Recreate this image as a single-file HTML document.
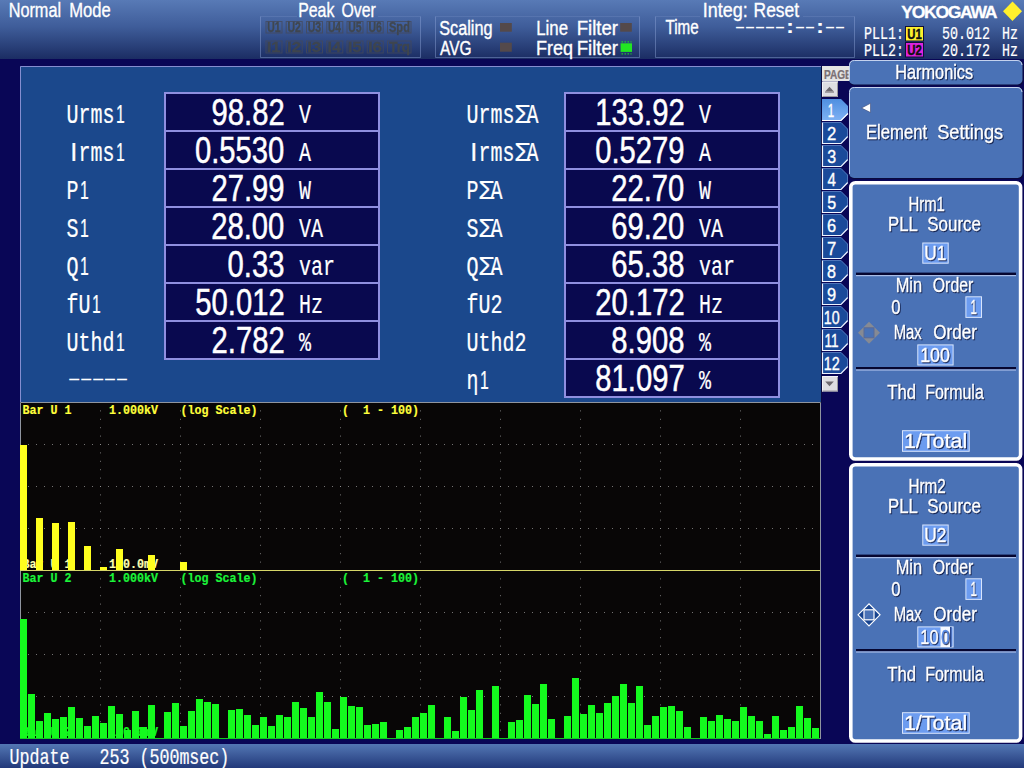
<!DOCTYPE html>
<html lang="en"><head><meta charset="utf-8"><title>Power Analyzer - Harmonics</title>
<style>
html,body{margin:0;padding:0;background:#08054c;width:1024px;height:768px;overflow:hidden}
svg{display:block}
text{white-space:pre}
.s{font-family:"Liberation Sans",sans-serif}
.sb{font-family:"Liberation Sans",sans-serif;font-weight:bold}
.m{font-family:"Liberation Mono",monospace}
.mb{font-family:"Liberation Mono",monospace;font-weight:bold}
.sh{filter:drop-shadow(1px 1px 0 rgba(10,20,60,0.85))}
</style></head><body>
<svg width="1024" height="768" viewBox="0 0 1024 768">
<defs><linearGradient id="hg" x1="0" y1="0" x2="0" y2="1"><stop offset="0" stop-color="#587ab6"/><stop offset="0.45" stop-color="#3f5d9a"/><stop offset="1" stop-color="#1b2d63"/></linearGradient><linearGradient id="sg" x1="0" y1="0" x2="0" y2="1"><stop offset="0" stop-color="#5377b4"/><stop offset="1" stop-color="#22397a"/></linearGradient><linearGradient id="t1" x1="0" y1="0" x2="0" y2="1"><stop offset="0" stop-color="#4f8fe0"/><stop offset="1" stop-color="#7fb2f4"/></linearGradient></defs>
<rect x="0" y="0" width="1024" height="768" fill="#090656" />
<rect x="0" y="0" width="1024" height="59" fill="url(#hg)" />
<text class="s " transform="translate(0,16.50) scale(0.8072,1)" font-size="20.35" fill="#fff" stroke="#fff" stroke-width="0.35" vector-effect="non-scaling-stroke"><tspan x="10.74" textLength="64.92" lengthAdjust="spacingAndGlyphs">Normal</tspan> <tspan x="85.78" textLength="51.41" lengthAdjust="spacingAndGlyphs">Mode</tspan></text>
<text class="s " transform="translate(0,16.50) scale(0.7794,1)" font-size="20.35" fill="#fff" stroke="#fff" stroke-width="0.35" vector-effect="non-scaling-stroke"><tspan x="382.58" textLength="46.41" lengthAdjust="spacingAndGlyphs">Peak</tspan> <tspan x="438.14" textLength="44.07" lengthAdjust="spacingAndGlyphs">Over</tspan></text>
<path d="M260.5 16.5V57.5H420.5V16.5" fill="none" stroke="#8fa4d8" stroke-opacity="0.45" stroke-width="1"/>
<path d="M260.5 16.5H297 M378 16.5H420.5" fill="none" stroke="#8fa4d8" stroke-opacity="0.2" stroke-width="1"/>
<path d="M435.5 16.5V57.5H639.5V16.5" fill="none" stroke="#8fa4d8" stroke-opacity="0.45" stroke-width="1"/>
<path d="M435.5 16.5H639.5" fill="none" stroke="#8fa4d8" stroke-opacity="0.2" stroke-width="1"/>
<path d="M655.5 16.5V57.5H854.5V16.5" fill="none" stroke="#8fa4d8" stroke-opacity="0.45" stroke-width="1"/>
<path d="M655.5 16.5H700 M803 16.5H854.5" fill="none" stroke="#8fa4d8" stroke-opacity="0.2" stroke-width="1"/>
<rect x="266.0" y="21.5" width="16" height="11.5" fill="none" stroke="#454a5a" stroke-opacity="0.8" stroke-width="1"/>
<text class="sb " transform="translate(267.18,32.00) scale(0.7163,1)" font-size="14.53" fill="#40464c" stroke="#40464c" stroke-width="0.3" vector-effect="non-scaling-stroke" opacity="0.95">U1</text>
<rect x="286.2" y="21.5" width="16" height="11.5" fill="none" stroke="#454a5a" stroke-opacity="0.8" stroke-width="1"/>
<text class="sb " transform="translate(287.42,32.00) scale(0.7236,1)" font-size="14.53" fill="#40464c" stroke="#40464c" stroke-width="0.3" vector-effect="non-scaling-stroke" opacity="0.95">U2</text>
<rect x="306.5" y="21.5" width="16" height="11.5" fill="none" stroke="#454a5a" stroke-opacity="0.8" stroke-width="1"/>
<text class="sb " transform="translate(307.67,32.00) scale(0.7211,1)" font-size="14.53" fill="#40464c" stroke="#40464c" stroke-width="0.3" vector-effect="non-scaling-stroke" opacity="0.95">U3</text>
<rect x="326.8" y="21.5" width="16" height="11.5" fill="none" stroke="#454a5a" stroke-opacity="0.8" stroke-width="1"/>
<text class="sb " transform="translate(327.94,32.00) scale(0.7033,1)" font-size="14.53" fill="#40464c" stroke="#40464c" stroke-width="0.3" vector-effect="non-scaling-stroke" opacity="0.95">U4</text>
<rect x="347.0" y="21.5" width="16" height="11.5" fill="none" stroke="#454a5a" stroke-opacity="0.8" stroke-width="1"/>
<text class="sb " transform="translate(348.18,32.00) scale(0.7163,1)" font-size="14.53" fill="#40464c" stroke="#40464c" stroke-width="0.3" vector-effect="non-scaling-stroke" opacity="0.95">U5</text>
<rect x="367.2" y="21.5" width="16" height="11.5" fill="none" stroke="#454a5a" stroke-opacity="0.8" stroke-width="1"/>
<text class="sb " transform="translate(368.42,32.00) scale(0.7211,1)" font-size="14.53" fill="#40464c" stroke="#40464c" stroke-width="0.3" vector-effect="non-scaling-stroke" opacity="0.95">U6</text>
<rect x="387.5" y="21.5" width="23.5" height="11.5" fill="none" stroke="#454a5a" stroke-opacity="0.8" stroke-width="1"/>
<text class="sb " transform="translate(388.99,32.00) scale(0.7627,1)" font-size="14.53" fill="#40464c" stroke="#40464c" stroke-width="0.3" vector-effect="non-scaling-stroke" opacity="0.95">Spd</text>
<rect x="266.0" y="41" width="16" height="12" fill="none" stroke="#454a5a" stroke-opacity="0.8" stroke-width="1"/>
<text class="sb " transform="translate(266.70,52.00) scale(1.1513,1)" font-size="14.53" fill="#40464c" stroke="#40464c" stroke-width="0.3" vector-effect="non-scaling-stroke" opacity="0.95">I1</text>
<rect x="286.2" y="41" width="16" height="12" fill="none" stroke="#454a5a" stroke-opacity="0.8" stroke-width="1"/>
<text class="sb " transform="translate(286.93,52.00) scale(1.1703,1)" font-size="14.53" fill="#40464c" stroke="#40464c" stroke-width="0.3" vector-effect="non-scaling-stroke" opacity="0.95">I2</text>
<rect x="306.5" y="41" width="16" height="12" fill="none" stroke="#454a5a" stroke-opacity="0.8" stroke-width="1"/>
<text class="sb " transform="translate(307.18,52.00) scale(1.1639,1)" font-size="14.53" fill="#40464c" stroke="#40464c" stroke-width="0.3" vector-effect="non-scaling-stroke" opacity="0.95">I3</text>
<rect x="326.8" y="41" width="16" height="12" fill="none" stroke="#454a5a" stroke-opacity="0.8" stroke-width="1"/>
<text class="sb " transform="translate(327.48,52.00) scale(1.1181,1)" font-size="14.53" fill="#40464c" stroke="#40464c" stroke-width="0.3" vector-effect="non-scaling-stroke" opacity="0.95">I4</text>
<rect x="347.0" y="41" width="16" height="12" fill="none" stroke="#454a5a" stroke-opacity="0.8" stroke-width="1"/>
<text class="sb " transform="translate(347.70,52.00) scale(1.1513,1)" font-size="14.53" fill="#40464c" stroke="#40464c" stroke-width="0.3" vector-effect="non-scaling-stroke" opacity="0.95">I5</text>
<rect x="367.2" y="41" width="16" height="12" fill="none" stroke="#454a5a" stroke-opacity="0.8" stroke-width="1"/>
<text class="sb " transform="translate(367.93,52.00) scale(1.1639,1)" font-size="14.53" fill="#40464c" stroke="#40464c" stroke-width="0.3" vector-effect="non-scaling-stroke" opacity="0.95">I6</text>
<rect x="387.5" y="41" width="23.5" height="12" fill="none" stroke="#454a5a" stroke-opacity="0.8" stroke-width="1"/>
<text class="sb " transform="translate(389.15,52.00) scale(0.9263,1)" font-size="14.53" fill="#40464c" stroke="#40464c" stroke-width="0.3" vector-effect="non-scaling-stroke" opacity="0.95">Trq</text>
<text class="s " transform="translate(439.27,34.60) scale(0.7981,1)" font-size="20.35" fill="#fff" stroke="#fff" stroke-width="0.35" vector-effect="non-scaling-stroke" >Scaling</text>
<text class="s " transform="translate(439.97,54.70) scale(0.7614,1)" font-size="20.35" fill="#fff" stroke="#fff" stroke-width="0.35" vector-effect="non-scaling-stroke" >AVG</text>
<text class="s " transform="translate(0,34.60) scale(0.8695,1)" font-size="20.35" fill="#fff" stroke="#fff" stroke-width="0.35" vector-effect="non-scaling-stroke"><tspan x="616.70" textLength="36.61" lengthAdjust="spacingAndGlyphs">Line</tspan> <tspan x="663.35" textLength="47.41" lengthAdjust="spacingAndGlyphs">Filter</tspan></text>
<text class="s " transform="translate(0,54.70) scale(0.8981,1)" font-size="20.35" fill="#fff" stroke="#fff" stroke-width="0.35" vector-effect="non-scaling-stroke"><tspan x="596.95" textLength="41.21" lengthAdjust="spacingAndGlyphs">Freq</tspan> <tspan x="642.21" textLength="45.90" lengthAdjust="spacingAndGlyphs">Filter</tspan></text>
<rect x="500" y="23" width="11.8" height="8.7" fill="#54494a" />
<rect x="500" y="42.7" width="11.8" height="9" fill="#54494a" />
<rect x="620.2" y="23" width="11.6" height="8.7" fill="#54494a" />
<rect x="620.6" y="43.3" width="11.4" height="8.6" fill="#22e622" />
<path d="M621.5 41.8H631.5M621.5 53.8H631.5" fill="none" stroke="#22e622" stroke-width="1.2" stroke-dasharray="1.5 1.5" stroke-opacity="0.8"/>
<text class="s " transform="translate(0,16.80) scale(0.8693,1)" font-size="20.35" fill="#fff" stroke="#fff" stroke-width="0.35" vector-effect="non-scaling-stroke"><tspan x="808.41" textLength="51.63" lengthAdjust="spacingAndGlyphs">Integ:</tspan> <tspan x="866.87" textLength="52.41" lengthAdjust="spacingAndGlyphs">Reset</tspan></text>
<text class="s " transform="translate(665.47,34.40) scale(0.7468,1)" font-size="20.35" fill="#fff" stroke="#fff" stroke-width="0.35" vector-effect="non-scaling-stroke" >Time</text>
<text class="m" transform="translate(731.34,32.60) scale(1.5377,1)" font-size="18.99" letter-spacing="-4.891" fill="#fff">-----:--:--</text>
<text class="sb " transform="translate(901.30,18.00) scale(1.0250,1)" font-size="17.15" fill="#fff" stroke="#fff" stroke-width="0.3" vector-effect="non-scaling-stroke"  letter-spacing="-1.3">YOKOGAWA</text>
<path d="M1012.5 1.5L1022 11.2L1012.5 21L1003 11.2Z" fill="#fff02c"/>
<text class="m " transform="translate(864.00,39.40) scale(0.7321,1)" font-size="18.21" fill="#fff" stroke="#fff" stroke-width="0.2" vector-effect="non-scaling-stroke" >PLL1:</text>
<text class="m " transform="translate(864.00,55.50) scale(0.7321,1)" font-size="18.21" fill="#fff" stroke="#fff" stroke-width="0.2" vector-effect="non-scaling-stroke" >PLL2:</text>
<rect x="905.5" y="26.5" width="18" height="14.5" fill="#fff02c" stroke="#10103a" stroke-width="1"/>
<rect x="905.5" y="42.5" width="18" height="14.5" fill="#de22de" stroke="#10103a" stroke-width="1"/>
<text class="sb " transform="translate(907.32,39.00) scale(0.7798,1)" font-size="14.53" fill="#111" stroke="#111" stroke-width="0.35" vector-effect="non-scaling-stroke" >U1</text>
<text class="sb " transform="translate(907.31,55.00) scale(0.7878,1)" font-size="14.53" fill="#111" stroke="#111" stroke-width="0.35" vector-effect="non-scaling-stroke" >U2</text>
<text class="m " transform="translate(942.00,39.40) scale(0.7321,1)" font-size="18.21" fill="#fff" stroke="#fff" stroke-width="0.2" vector-effect="non-scaling-stroke" >50.012</text>
<text class="m " transform="translate(942.00,55.50) scale(0.7321,1)" font-size="18.21" fill="#fff" stroke="#fff" stroke-width="0.2" vector-effect="non-scaling-stroke" >20.172</text>
<text class="m " transform="translate(1002.00,39.40) scale(0.7321,1)" font-size="18.21" fill="#fff" stroke="#fff" stroke-width="0.2" vector-effect="non-scaling-stroke" >Hz</text>
<text class="m " transform="translate(1002.00,55.50) scale(0.7321,1)" font-size="18.21" fill="#fff" stroke="#fff" stroke-width="0.2" vector-effect="non-scaling-stroke" >Hz</text>
<rect x="20" y="66" width="801" height="337" fill="#1b488c" />
<path d="M20.5 403V66.5H821" fill="none" stroke="#858ed0" stroke-width="1"/>
<path d="M821.5 66V403" fill="none" stroke="#0a0a40" stroke-width="1"/>
<rect x="164" y="92" width="216" height="268" fill="#09094f" />
<rect x="164" y="92" width="2" height="268" fill="#8f8fe0" />
<rect x="378" y="92" width="2" height="268" fill="#8f8fe0" />
<rect x="164" y="92" width="216" height="2" fill="#8f8fe0" />
<rect x="164" y="130" width="216" height="2" fill="#8f8fe0" />
<rect x="164" y="168" width="216" height="2" fill="#8f8fe0" />
<rect x="164" y="206" width="216" height="2" fill="#8f8fe0" />
<rect x="164" y="244" width="216" height="2" fill="#8f8fe0" />
<rect x="164" y="282" width="216" height="2" fill="#8f8fe0" />
<rect x="164" y="320" width="216" height="2" fill="#8f8fe0" />
<rect x="164" y="358" width="216" height="2" fill="#8f8fe0" />
<rect x="564" y="92" width="216" height="306" fill="#09094f" />
<rect x="564" y="92" width="2" height="306" fill="#8f8fe0" />
<rect x="778" y="92" width="2" height="306" fill="#8f8fe0" />
<rect x="564" y="92" width="216" height="2" fill="#8f8fe0" />
<rect x="564" y="130" width="216" height="2" fill="#8f8fe0" />
<rect x="564" y="168" width="216" height="2" fill="#8f8fe0" />
<rect x="564" y="206" width="216" height="2" fill="#8f8fe0" />
<rect x="564" y="244" width="216" height="2" fill="#8f8fe0" />
<rect x="564" y="282" width="216" height="2" fill="#8f8fe0" />
<rect x="564" y="320" width="216" height="2" fill="#8f8fe0" />
<rect x="564" y="358" width="216" height="2" fill="#8f8fe0" />
<rect x="564" y="396" width="216" height="2" fill="#8f8fe0" />
<text class="m" transform="translate(66.60,122.80) scale(0.7321,1)" font-size="27.31" fill="#fff" stroke="#fff" stroke-width="0.25" vector-effect="non-scaling-stroke"><tspan x="0.00">Urms</tspan><tspan class="s" font-size="26.16" x="67.48" textLength="11.96" lengthAdjust="spacingAndGlyphs">1</tspan></text>
<text class="s" transform="translate(211.56,125.30) scale(0.8081,1)" font-size="36.16" fill="#fff" stroke="#fff" stroke-width="0.45" vector-effect="non-scaling-stroke">98.82</text>
<text class="m " transform="translate(299.00,122.80) scale(0.7321,1)" font-size="27.31" fill="#fff" stroke="#fff" stroke-width="0.2" vector-effect="non-scaling-stroke" >V</text>
<text class="m" transform="translate(66.60,160.80) scale(0.7321,1)" font-size="27.31" fill="#fff" stroke="#fff" stroke-width="0.25" vector-effect="non-scaling-stroke"><tspan class="s" font-size="26.16" x="5.12" textLength="9.69" lengthAdjust="spacingAndGlyphs">I</tspan><tspan x="16.39">rms</tspan><tspan class="s" font-size="26.16" x="67.48" textLength="11.96" lengthAdjust="spacingAndGlyphs">1</tspan></text>
<text class="s" transform="translate(194.96,163.30) scale(0.8081,1)" font-size="36.16" fill="#fff" stroke="#fff" stroke-width="0.45" vector-effect="non-scaling-stroke">0.5530</text>
<text class="m " transform="translate(299.00,160.80) scale(0.7321,1)" font-size="27.31" fill="#fff" stroke="#fff" stroke-width="0.2" vector-effect="non-scaling-stroke" >A</text>
<text class="m" transform="translate(66.60,198.80) scale(0.7321,1)" font-size="27.31" fill="#fff" stroke="#fff" stroke-width="0.25" vector-effect="non-scaling-stroke"><tspan x="0.00">P</tspan><tspan class="s" font-size="26.16" x="18.31" textLength="11.96" lengthAdjust="spacingAndGlyphs">1</tspan></text>
<text class="s" transform="translate(211.47,201.30) scale(0.8081,1)" font-size="36.16" fill="#fff" stroke="#fff" stroke-width="0.45" vector-effect="non-scaling-stroke">27.99</text>
<text class="m " transform="translate(299.00,198.80) scale(0.7321,1)" font-size="27.31" fill="#fff" stroke="#fff" stroke-width="0.2" vector-effect="non-scaling-stroke" >W</text>
<text class="m" transform="translate(66.60,236.80) scale(0.7321,1)" font-size="27.31" fill="#fff" stroke="#fff" stroke-width="0.25" vector-effect="non-scaling-stroke"><tspan x="0.00">S</tspan><tspan class="s" font-size="26.16" x="18.31" textLength="11.96" lengthAdjust="spacingAndGlyphs">1</tspan></text>
<text class="s" transform="translate(211.21,239.30) scale(0.8081,1)" font-size="36.16" fill="#fff" stroke="#fff" stroke-width="0.45" vector-effect="non-scaling-stroke">28.00</text>
<text class="m " transform="translate(299.00,236.80) scale(0.7321,1)" font-size="27.31" fill="#fff" stroke="#fff" stroke-width="0.2" vector-effect="non-scaling-stroke" >VA</text>
<text class="m" transform="translate(66.60,274.80) scale(0.7321,1)" font-size="27.31" fill="#fff" stroke="#fff" stroke-width="0.25" vector-effect="non-scaling-stroke"><tspan x="0.00">Q</tspan><tspan class="s" font-size="26.16" x="18.31" textLength="11.96" lengthAdjust="spacingAndGlyphs">1</tspan></text>
<text class="s" transform="translate(227.60,277.30) scale(0.8081,1)" font-size="36.16" fill="#fff" stroke="#fff" stroke-width="0.45" vector-effect="non-scaling-stroke">0.33</text>
<text class="m " transform="translate(299.00,274.80) scale(0.7321,1)" font-size="27.31" fill="#fff" stroke="#fff" stroke-width="0.2" vector-effect="non-scaling-stroke" >var</text>
<text class="m" transform="translate(66.60,312.80) scale(0.7321,1)" font-size="27.31" fill="#fff" stroke="#fff" stroke-width="0.25" vector-effect="non-scaling-stroke"><tspan x="0.00">fU</tspan><tspan class="s" font-size="26.16" x="34.70" textLength="11.96" lengthAdjust="spacingAndGlyphs">1</tspan></text>
<text class="s" transform="translate(195.31,315.30) scale(0.8081,1)" font-size="36.16" fill="#fff" stroke="#fff" stroke-width="0.45" vector-effect="non-scaling-stroke">50.012</text>
<text class="m " transform="translate(299.00,312.80) scale(0.7321,1)" font-size="27.31" fill="#fff" stroke="#fff" stroke-width="0.2" vector-effect="non-scaling-stroke" >Hz</text>
<text class="m" transform="translate(66.60,350.80) scale(0.7321,1)" font-size="27.31" fill="#fff" stroke="#fff" stroke-width="0.25" vector-effect="non-scaling-stroke"><tspan x="0.00">Uthd</tspan><tspan class="s" font-size="26.16" x="67.48" textLength="11.96" lengthAdjust="spacingAndGlyphs">1</tspan></text>
<text class="s" transform="translate(211.56,353.30) scale(0.8081,1)" font-size="36.16" fill="#fff" stroke="#fff" stroke-width="0.45" vector-effect="non-scaling-stroke">2.782</text>
<text class="m " transform="translate(299.00,350.80) scale(0.7321,1)" font-size="27.31" fill="#fff" stroke="#fff" stroke-width="0.2" vector-effect="non-scaling-stroke" >%</text>
<text class="m" transform="translate(466.60,122.80) scale(0.7321,1)" font-size="27.31" fill="#fff" stroke="#fff" stroke-width="0.25" vector-effect="non-scaling-stroke"><tspan x="0.00">Urms</tspan><tspan class="s" font-size="26.16" x="64.99" textLength="23.07" lengthAdjust="spacingAndGlyphs">Σ</tspan><tspan x="81.96">A</tspan></text>
<text class="s" transform="translate(595.31,125.30) scale(0.8081,1)" font-size="36.16" fill="#fff" stroke="#fff" stroke-width="0.45" vector-effect="non-scaling-stroke">133.92</text>
<text class="m " transform="translate(699.00,122.80) scale(0.7321,1)" font-size="27.31" fill="#fff" stroke="#fff" stroke-width="0.2" vector-effect="non-scaling-stroke" >V</text>
<text class="m" transform="translate(466.60,160.80) scale(0.7321,1)" font-size="27.31" fill="#fff" stroke="#fff" stroke-width="0.25" vector-effect="non-scaling-stroke"><tspan class="s" font-size="26.16" x="5.12" textLength="9.69" lengthAdjust="spacingAndGlyphs">I</tspan><tspan x="16.39">rms</tspan><tspan class="s" font-size="26.16" x="64.99" textLength="23.07" lengthAdjust="spacingAndGlyphs">Σ</tspan><tspan x="81.96">A</tspan></text>
<text class="s" transform="translate(595.22,163.30) scale(0.8081,1)" font-size="36.16" fill="#fff" stroke="#fff" stroke-width="0.45" vector-effect="non-scaling-stroke">0.5279</text>
<text class="m " transform="translate(699.00,160.80) scale(0.7321,1)" font-size="27.31" fill="#fff" stroke="#fff" stroke-width="0.2" vector-effect="non-scaling-stroke" >A</text>
<text class="m" transform="translate(466.60,198.80) scale(0.7321,1)" font-size="27.31" fill="#fff" stroke="#fff" stroke-width="0.25" vector-effect="non-scaling-stroke"><tspan x="0.00">P</tspan><tspan class="s" font-size="26.16" x="15.82" textLength="23.07" lengthAdjust="spacingAndGlyphs">Σ</tspan><tspan x="32.78">A</tspan></text>
<text class="s" transform="translate(611.21,201.30) scale(0.8081,1)" font-size="36.16" fill="#fff" stroke="#fff" stroke-width="0.45" vector-effect="non-scaling-stroke">22.70</text>
<text class="m " transform="translate(699.00,198.80) scale(0.7321,1)" font-size="27.31" fill="#fff" stroke="#fff" stroke-width="0.2" vector-effect="non-scaling-stroke" >W</text>
<text class="m" transform="translate(466.60,236.80) scale(0.7321,1)" font-size="27.31" fill="#fff" stroke="#fff" stroke-width="0.25" vector-effect="non-scaling-stroke"><tspan x="0.00">S</tspan><tspan class="s" font-size="26.16" x="15.82" textLength="23.07" lengthAdjust="spacingAndGlyphs">Σ</tspan><tspan x="32.78">A</tspan></text>
<text class="s" transform="translate(611.21,239.30) scale(0.8081,1)" font-size="36.16" fill="#fff" stroke="#fff" stroke-width="0.45" vector-effect="non-scaling-stroke">69.20</text>
<text class="m " transform="translate(699.00,236.80) scale(0.7321,1)" font-size="27.31" fill="#fff" stroke="#fff" stroke-width="0.2" vector-effect="non-scaling-stroke" >VA</text>
<text class="m" transform="translate(466.60,274.80) scale(0.7321,1)" font-size="27.31" fill="#fff" stroke="#fff" stroke-width="0.25" vector-effect="non-scaling-stroke"><tspan x="0.00">Q</tspan><tspan class="s" font-size="26.16" x="15.82" textLength="23.07" lengthAdjust="spacingAndGlyphs">Σ</tspan><tspan x="32.78">A</tspan></text>
<text class="s" transform="translate(611.35,277.30) scale(0.8081,1)" font-size="36.16" fill="#fff" stroke="#fff" stroke-width="0.45" vector-effect="non-scaling-stroke">65.38</text>
<text class="m " transform="translate(699.00,274.80) scale(0.7321,1)" font-size="27.31" fill="#fff" stroke="#fff" stroke-width="0.2" vector-effect="non-scaling-stroke" >var</text>
<text class="m" transform="translate(466.60,312.80) scale(0.7321,1)" font-size="27.31" fill="#fff" stroke="#fff" stroke-width="0.25" vector-effect="non-scaling-stroke"><tspan x="0.00">fU2</tspan></text>
<text class="s" transform="translate(595.31,315.30) scale(0.8081,1)" font-size="36.16" fill="#fff" stroke="#fff" stroke-width="0.45" vector-effect="non-scaling-stroke">20.172</text>
<text class="m " transform="translate(699.00,312.80) scale(0.7321,1)" font-size="27.31" fill="#fff" stroke="#fff" stroke-width="0.2" vector-effect="non-scaling-stroke" >Hz</text>
<text class="m" transform="translate(466.60,350.80) scale(0.7321,1)" font-size="27.31" fill="#fff" stroke="#fff" stroke-width="0.25" vector-effect="non-scaling-stroke"><tspan x="0.00">Uthd2</tspan></text>
<text class="s" transform="translate(611.35,353.30) scale(0.8081,1)" font-size="36.16" fill="#fff" stroke="#fff" stroke-width="0.45" vector-effect="non-scaling-stroke">8.908</text>
<text class="m " transform="translate(699.00,350.80) scale(0.7321,1)" font-size="27.31" fill="#fff" stroke="#fff" stroke-width="0.2" vector-effect="non-scaling-stroke" >%</text>
<text class="m" transform="translate(466.60,388.80) scale(0.7321,1)" font-size="27.31" fill="#fff" stroke="#fff" stroke-width="0.25" vector-effect="non-scaling-stroke"><tspan x="0.00">η</tspan><tspan class="s" font-size="26.16" x="18.31" textLength="11.96" lengthAdjust="spacingAndGlyphs">1</tspan></text>
<text class="s" transform="translate(595.31,391.30) scale(0.8081,1)" font-size="36.16" fill="#fff" stroke="#fff" stroke-width="0.45" vector-effect="non-scaling-stroke">81.097</text>
<text class="m " transform="translate(699.00,388.80) scale(0.7321,1)" font-size="27.31" fill="#fff" stroke="#fff" stroke-width="0.2" vector-effect="non-scaling-stroke" >%</text>
<text class="m" transform="translate(63.15,385.40) scale(1.9221,1)" font-size="18.99" letter-spacing="-5.151" fill="#fff">-----</text>
<rect x="20" y="402" width="801" height="337" fill="#080606" />
<path d="M20.5 739V402.5H820.5V739" fill="none" stroke="#8f959f" stroke-width="1"/>
<path d="M100.5 402V739 M180.5 402V739 M260.5 402V739 M340.5 402V739 M420.5 402V739 M500.5 402V739 M580.5 402V739 M660.5 402V739 M740.5 402V739" stroke="#989898" stroke-width="1" stroke-dasharray="1 7.4" fill="none" stroke-opacity="0.75"/>
<path d="M20 444.5H820 M20 486.5H820 M20 528.5H820 M20 612.5H820 M20 654.5H820 M20 696.5H820" stroke="#989898" stroke-width="1" stroke-dasharray="1 7" fill="none" stroke-opacity="0.75"/>
<text class="mb" transform="translate(0,413.60) scale(0.8541,1)" font-size="13.66" fill="#ffff3c" stroke="#ffff3c" stroke-width="0.2" vector-effect="non-scaling-stroke"><tspan x="26.34">Bar U 1</tspan>   <tspan x="127.62">1.000kV</tspan>   <tspan x="211.33">(log Scale)</tspan>   <tspan x="400.41">(  1 - 100)</tspan></text>
<text class="mb" transform="translate(0,581.60) scale(0.8541,1)" font-size="13.66" fill="#1cf53a" stroke="#1cf53a" stroke-width="0.2" vector-effect="non-scaling-stroke"><tspan x="26.34">Bar U 2</tspan>   <tspan x="127.62">1.000kV</tspan>   <tspan x="211.33">(log Scale)</tspan>   <tspan x="400.41">(  1 - 100)</tspan></text>
<text class="mb" transform="translate(0,568.00) scale(0.8541,1)" font-size="13.66" fill="#ffffb0" stroke="#ffffb0" stroke-width="0.2" vector-effect="non-scaling-stroke"><tspan x="26.34">Bar U 1</tspan>   <tspan x="127.62">100.0mV</tspan></text>
<path d="M20 445h7V570h-7z M36 518h7V570h-7z M52 523h7V570h-7z M68 522h7V570h-7z M84 546h7V570h-7z M100 567h7V570h-7z M116 549h7V570h-7z M148 555h7V570h-7z M180 562h7V570h-7z" fill="#ffff1e"/>
<rect x="20" y="570" width="800" height="1" fill="#d6d668" />
<path d="M20 619h7V739h-7z M28 694h7V739h-7z M36 721h7V739h-7z M44 713h7V739h-7z M52 719h7V739h-7z M60 717h7V739h-7z M68 707h7V739h-7z M76 718h7V739h-7z M84 726h7V739h-7z M92 716h7V739h-7z M100 723h7V739h-7z M108 706h7V739h-7z M116 714h7V739h-7z M124 730h7V739h-7z M132 711h7V739h-7z M140 727h7V739h-7z M148 705h7V739h-7z M156 738h7V739h-7z M164 712h7V739h-7z M172 703h7V739h-7z M180 726h7V739h-7z M188 711h7V739h-7z M196 699h7V739h-7z M204 702h7V739h-7z M212 704h7V739h-7z M220 738h7V739h-7z M228 710h7V739h-7z M236 709h7V739h-7z M244 715h7V739h-7z M252 725h7V739h-7z M260 717h7V739h-7z M268 726h7V739h-7z M276 715h7V739h-7z M284 717h7V739h-7z M292 702h7V739h-7z M300 708h7V739h-7z M308 717h7V739h-7z M316 692h7V739h-7z M324 702h7V739h-7z M332 729h7V739h-7z M340 697h7V739h-7z M348 706h7V739h-7z M356 707h7V739h-7z M364 725h7V739h-7z M372 724h7V739h-7z M380 722h7V739h-7z M388 738h7V739h-7z M396 730h7V739h-7z M404 727h7V739h-7z M412 717h7V739h-7z M420 713h7V739h-7z M428 705h7V739h-7z M436 738h7V739h-7z M444 717h7V739h-7z M452 731h7V739h-7z M460 697h7V739h-7z M468 710h7V739h-7z M476 690h7V739h-7z M484 738h7V739h-7z M492 686h7V739h-7z M500 738h7V739h-7z M508 722h7V739h-7z M516 720h7V739h-7z M524 695h7V739h-7z M532 704h7V739h-7z M540 684h7V739h-7z M548 719h7V739h-7z M556 738h7V739h-7z M564 716h7V739h-7z M572 678h7V739h-7z M580 714h7V739h-7z M588 705h7V739h-7z M596 713h7V739h-7z M604 703h7V739h-7z M612 696h7V739h-7z M620 684h7V739h-7z M628 703h7V739h-7z M636 686h7V739h-7z M644 725h7V739h-7z M652 716h7V739h-7z M660 707h7V739h-7z M668 706h7V739h-7z M676 711h7V739h-7z M684 727h7V739h-7z M692 738h7V739h-7z M700 717h7V739h-7z M708 721h7V739h-7z M716 715h7V739h-7z M724 719h7V739h-7z M732 721h7V739h-7z M740 707h7V739h-7z M748 716h7V739h-7z M756 721h7V739h-7z M764 734h7V739h-7z M772 716h7V739h-7z M780 730h7V739h-7z M788 727h7V739h-7z M796 706h7V739h-7z M804 718h7V739h-7z M812 728h7V739h-7z" fill="#14fa1e"/>
<rect x="20" y="738" width="800" height="1" fill="#14c81e" />
<text class="mb" transform="translate(0,736.00) scale(0.8541,1)" font-size="13.66" fill="#14fa1e" stroke="#14fa1e" stroke-width="0.2" vector-effect="non-scaling-stroke"><tspan x="26.34">Bar U 2</tspan>   <tspan x="127.62">100.0mV</tspan></text>
<rect x="0" y="744" width="1024" height="24" fill="url(#sg)" />
<text class="m " transform="translate(9.50,763.70) scale(0.7844,1)" font-size="21.24" fill="#fff" stroke="#fff" stroke-width="0.2" vector-effect="non-scaling-stroke" >Update   253 (500msec)</text>
<rect x="822" y="66" width="27" height="15" fill="#e4e4e4" />
<clipPath id="pc"><rect x="822" y="66" width="26.5" height="15"/></clipPath>
<g clip-path="url(#pc)">
<text class="sb " transform="translate(823.93,78.70) scale(0.7745,1)" font-size="13.08" fill="#7a7074" stroke="#7a7074" stroke-width="0.2" vector-effect="non-scaling-stroke" >PAGE</text>
</g>
<rect x="822" y="81.5" width="16" height="15.5" fill="#dedee2" />
<path d="M822.5 97.0V82.0H838" fill="none" stroke="#f4f4f6"/>
<path d="M822.5 96.5H837.5V82.5" fill="none" stroke="#9a989e"/>
<path d="M825.2 91.5L829.5 86.7L833.8 91.5Z" fill="#6e6a70"/><rect x="825" y="91.5" width="9" height="1.2" fill="#8a868c"/>
<rect x="822" y="376" width="16" height="15.5" fill="#dedee2" />
<path d="M822.5 391.5V376.5H838" fill="none" stroke="#f4f4f6"/>
<path d="M822.5 391H837.5V377" fill="none" stroke="#9a989e"/>
<path d="M825.2 381.5L829.5 386.3L833.8 381.5Z" fill="#6e6a70"/>
<path d="M822 99H841L848 106V114L841 121H822Z" fill="url(#t1)"/>
<path d="M822 120.5H841L848 113.5" fill="none" stroke="#fff" stroke-width="1.2"/>
<text class="s " transform="translate(827.72,116.90) scale(0.6527,1)" font-size="17.73" fill="#fff" stroke="#fff" stroke-width="0.35" vector-effect="non-scaling-stroke" >1</text>
<path d="M822 122H841L848 129V137L841 144H822Z" fill="#1a4a9a"/>
<path d="M822.5 122V143.5H841L847.7 136.5" fill="none" stroke="#f0f4ff" stroke-width="1.2"/>
<path d="M822 122.5H841L847.5 129V136" fill="none" stroke="#5d7fc0" stroke-width="1" stroke-opacity="0.8"/>
<text class="s " transform="translate(826.97,139.90) scale(0.9399,1)" font-size="17.73" fill="#fff" stroke="#fff" stroke-width="0.35" vector-effect="non-scaling-stroke" >2</text>
<path d="M822 145H841L848 152V160L841 167H822Z" fill="#1a4a9a"/>
<path d="M822.5 145V166.5H841L847.7 159.5" fill="none" stroke="#f0f4ff" stroke-width="1.2"/>
<path d="M822 145.5H841L847.5 152V159" fill="none" stroke="#5d7fc0" stroke-width="1" stroke-opacity="0.8"/>
<text class="s " transform="translate(827.19,162.90) scale(0.9023,1)" font-size="17.73" fill="#fff" stroke="#fff" stroke-width="0.35" vector-effect="non-scaling-stroke" >3</text>
<path d="M822 168H841L848 175V183L841 190H822Z" fill="#1a4a9a"/>
<path d="M822.5 168V189.5H841L847.7 182.5" fill="none" stroke="#f0f4ff" stroke-width="1.2"/>
<path d="M822 168.5H841L847.5 175V182" fill="none" stroke="#5d7fc0" stroke-width="1" stroke-opacity="0.8"/>
<text class="s " transform="translate(827.47,185.90) scale(0.8487,1)" font-size="17.73" fill="#fff" stroke="#fff" stroke-width="0.35" vector-effect="non-scaling-stroke" >4</text>
<path d="M822 191H841L848 198V206L841 213H822Z" fill="#1a4a9a"/>
<path d="M822.5 191V212.5H841L847.7 205.5" fill="none" stroke="#f0f4ff" stroke-width="1.2"/>
<path d="M822 191.5H841L847.5 198V205" fill="none" stroke="#5d7fc0" stroke-width="1" stroke-opacity="0.8"/>
<text class="s " transform="translate(827.16,208.90) scale(0.9023,1)" font-size="17.73" fill="#fff" stroke="#fff" stroke-width="0.35" vector-effect="non-scaling-stroke" >5</text>
<path d="M822 214H841L848 221V229L841 236H822Z" fill="#1a4a9a"/>
<path d="M822.5 214V235.5H841L847.7 228.5" fill="none" stroke="#f0f4ff" stroke-width="1.2"/>
<path d="M822 214.5H841L847.5 221V228" fill="none" stroke="#5d7fc0" stroke-width="1" stroke-opacity="0.8"/>
<text class="s " transform="translate(826.98,231.90) scale(0.9257,1)" font-size="17.73" fill="#fff" stroke="#fff" stroke-width="0.35" vector-effect="non-scaling-stroke" >6</text>
<path d="M822 237H841L848 244V252L841 259H822Z" fill="#1a4a9a"/>
<path d="M822.5 237V258.5H841L847.7 251.5" fill="none" stroke="#f0f4ff" stroke-width="1.2"/>
<path d="M822 237.5H841L847.5 244V251" fill="none" stroke="#5d7fc0" stroke-width="1" stroke-opacity="0.8"/>
<text class="s " transform="translate(826.95,254.90) scale(0.9420,1)" font-size="17.73" fill="#fff" stroke="#fff" stroke-width="0.35" vector-effect="non-scaling-stroke" >7</text>
<path d="M822 260H841L848 267V275L841 282H822Z" fill="#1a4a9a"/>
<path d="M822.5 260V281.5H841L847.7 274.5" fill="none" stroke="#f0f4ff" stroke-width="1.2"/>
<path d="M822 260.5H841L847.5 267V274" fill="none" stroke="#5d7fc0" stroke-width="1" stroke-opacity="0.8"/>
<text class="s " transform="translate(827.10,277.90) scale(0.9119,1)" font-size="17.73" fill="#fff" stroke="#fff" stroke-width="0.35" vector-effect="non-scaling-stroke" >8</text>
<path d="M822 283H841L848 290V298L841 305H822Z" fill="#1a4a9a"/>
<path d="M822.5 283V304.5H841L847.7 297.5" fill="none" stroke="#f0f4ff" stroke-width="1.2"/>
<path d="M822 283.5H841L847.5 290V297" fill="none" stroke="#5d7fc0" stroke-width="1" stroke-opacity="0.8"/>
<text class="s " transform="translate(827.04,300.90) scale(0.9257,1)" font-size="17.73" fill="#fff" stroke="#fff" stroke-width="0.35" vector-effect="non-scaling-stroke" >9</text>
<path d="M822 306H841L848 313V321L841 328H822Z" fill="#1a4a9a"/>
<path d="M822.5 306V327.5H841L847.7 320.5" fill="none" stroke="#f0f4ff" stroke-width="1.2"/>
<path d="M822 306.5H841L847.5 313V320" fill="none" stroke="#5d7fc0" stroke-width="1" stroke-opacity="0.8"/>
<text class="s " transform="translate(823.72,323.90) scale(0.8024,1)" font-size="17.73" fill="#fff" stroke="#fff" stroke-width="0.35" vector-effect="non-scaling-stroke" >10</text>
<path d="M822 329H841L848 336V344L841 351H822Z" fill="#1a4a9a"/>
<path d="M822.5 329V350.5H841L847.7 343.5" fill="none" stroke="#f0f4ff" stroke-width="1.2"/>
<path d="M822 329.5H841L847.5 336V343" fill="none" stroke="#5d7fc0" stroke-width="1" stroke-opacity="0.8"/>
<text class="s " transform="translate(824.57,346.90) scale(0.7651,1)" font-size="17.73" fill="#fff" stroke="#fff" stroke-width="0.35" vector-effect="non-scaling-stroke" >11</text>
<path d="M822 352H841L848 359V367L841 374H822Z" fill="#1a4a9a"/>
<path d="M822.5 352V373.5H841L847.7 366.5" fill="none" stroke="#f0f4ff" stroke-width="1.2"/>
<path d="M822 352.5H841L847.5 359V366" fill="none" stroke="#5d7fc0" stroke-width="1" stroke-opacity="0.8"/>
<text class="s " transform="translate(823.71,369.90) scale(0.8122,1)" font-size="17.73" fill="#fff" stroke="#fff" stroke-width="0.35" vector-effect="non-scaling-stroke" >12</text>
<rect x="849" y="60" width="174.5" height="25.5" rx="5.5" fill="#0a0a3c"/>
<rect x="849" y="60" width="173.5" height="24.5" rx="5" fill="#4a72b6"/>
<path d="M849.5 80.5V65.5Q849.5 60.5 854.5 60.5H1017Q1021.5 60.5 1022 65" fill="none" stroke="#c4d2ee" stroke-width="1"/>
<text class="s sh" transform="translate(895.26,79.00) scale(0.8013,1)" font-size="20.35" fill="#fff" stroke="#fff" stroke-width="0.35" vector-effect="non-scaling-stroke" >Harmonics</text>
<rect x="849" y="87" width="174.5" height="92" rx="5.5" fill="#0a0a3c"/>
<rect x="849" y="87" width="173.5" height="91" rx="5" fill="#4a72b6"/>
<path d="M849.5 174V92.5Q849.5 87.5 854.5 87.5H1017Q1021.5 87.5 1022 92" fill="none" stroke="#c4d2ee" stroke-width="1"/>
<path d="M861.5 108L870.5 103.3V112.5Z" fill="#fff" stroke="#3a4a78" stroke-width="0.6"/>
<text class="s sh" transform="translate(0,139.00) scale(0.8605,1)" font-size="20.35" fill="#fff" stroke="#fff" stroke-width="0.35" vector-effect="non-scaling-stroke"><tspan x="1006.27" textLength="71.33" lengthAdjust="spacingAndGlyphs">Element</tspan> <tspan x="1089.06" textLength="76.80" lengthAdjust="spacingAndGlyphs">Settings</tspan></text>
<rect x="850.8" y="182.8" width="169.8" height="276.2" rx="4.5" fill="#4a72b6" stroke="#fff" stroke-width="3.6"/>
<text class="s sh" transform="translate(908.48,210.50) scale(0.7327,1)" font-size="20.35" fill="#fff" stroke="#fff" stroke-width="0.35" vector-effect="non-scaling-stroke" >Hrm1</text>
<text class="s sh" transform="translate(0,230.80) scale(0.8286,1)" font-size="20.35" fill="#fff" stroke="#fff" stroke-width="0.35" vector-effect="non-scaling-stroke"><tspan x="1071.77" textLength="36.01" lengthAdjust="spacingAndGlyphs">PLL</tspan> <tspan x="1119.10" textLength="64.83" lengthAdjust="spacingAndGlyphs">Source</tspan></text>
<rect x="922.8" y="243.0" width="25.40000000000009" height="20.19999999999999" fill="#6c9cf0" stroke="#d8e4fc" stroke-width="1"/>
<text class="s sh" transform="translate(924.16,260.00) scale(0.8524,1)" font-size="20.35" fill="#fff" stroke="#fff" stroke-width="0.35" vector-effect="non-scaling-stroke" >U1</text>
<rect x="856" y="272.6" width="160" height="2.4" fill="#060630" />
<rect x="856" y="275.0" width="160" height="1.2" fill="#a8bce6" />
<text class="s sh" transform="translate(0,292.40) scale(0.7919,1)" font-size="20.35" fill="#fff" stroke="#fff" stroke-width="0.35" vector-effect="non-scaling-stroke"><tspan x="1131.09" textLength="33.34" lengthAdjust="spacingAndGlyphs">Min</tspan> <tspan x="1177.94" textLength="51.15" lengthAdjust="spacingAndGlyphs">Order</tspan></text>
<text class="s sh" transform="translate(891.35,313.60) scale(0.8208,1)" font-size="20.35" fill="#fff" stroke="#fff" stroke-width="0.35" vector-effect="non-scaling-stroke" >0</text>
<rect x="965.9" y="296.8" width="15.600000000000023" height="20.599999999999966" fill="#6c9cf0" stroke="#d8e4fc" stroke-width="1"/>
<text class="s sh" transform="translate(970.62,313.60) scale(0.5688,1)" font-size="20.35" fill="#fff" stroke="#fff" stroke-width="0.35" vector-effect="non-scaling-stroke" >1</text>
<path d="M858 332.8L869 321.8L880 332.8L869 343.8Z" fill="#868a94"/>
<rect x="864" y="327.8" width="10" height="10" fill="#4a72b6" stroke="#5a6a96" stroke-width="1"/>
<path d="M863.5 327.3L874.5 338.3M874.5 327.3L863.5 338.3" stroke="#4a72b6" stroke-width="0" />
<text class="s sh" transform="translate(0,338.90) scale(0.7850,1)" font-size="20.35" fill="#fff" stroke="#fff" stroke-width="0.35" vector-effect="non-scaling-stroke"><tspan x="1138.38" textLength="35.76" lengthAdjust="spacingAndGlyphs">Max</tspan> <tspan x="1188.85" textLength="55.65" lengthAdjust="spacingAndGlyphs">Order</tspan></text>
<rect x="917.8" y="344.9" width="35.30000000000007" height="20.100000000000023" fill="#6c9cf0" stroke="#d8e4fc" stroke-width="1"/>
<text class="s sh" transform="translate(920.14,361.90) scale(0.8791,1)" font-size="20.35" fill="#fff" stroke="#fff" stroke-width="0.35" vector-effect="non-scaling-stroke" >100</text>
<rect x="856" y="367" width="160" height="2.4" fill="#060630" />
<rect x="856" y="369.4" width="160" height="1.2" fill="#a8bce6" />
<text class="s sh" transform="translate(0,398.70) scale(0.8039,1)" font-size="20.35" fill="#fff" stroke="#fff" stroke-width="0.35" vector-effect="non-scaling-stroke"><tspan x="1103.66" textLength="35.88" lengthAdjust="spacingAndGlyphs">Thd</tspan> <tspan x="1150.88" textLength="72.90" lengthAdjust="spacingAndGlyphs">Formula</tspan></text>
<rect x="902.5" y="430.7" width="66.70000000000005" height="20.600000000000023" fill="#6c9cf0" stroke="#d8e4fc" stroke-width="1"/>
<text class="s sh" transform="translate(903.97,448.20) scale(1.0551,1)" font-size="20.35" fill="#fff" stroke="#fff" stroke-width="0.35" vector-effect="non-scaling-stroke" >1/Total</text>
<rect x="850.8" y="464.8" width="169.8" height="276.2" rx="4.5" fill="#4a72b6" stroke="#fff" stroke-width="3.6"/>
<text class="s sh" transform="translate(908.45,492.50) scale(0.7503,1)" font-size="20.35" fill="#fff" stroke="#fff" stroke-width="0.35" vector-effect="non-scaling-stroke" >Hrm2</text>
<text class="s sh" transform="translate(0,512.80) scale(0.8286,1)" font-size="20.35" fill="#fff" stroke="#fff" stroke-width="0.35" vector-effect="non-scaling-stroke"><tspan x="1071.77" textLength="36.01" lengthAdjust="spacingAndGlyphs">PLL</tspan> <tspan x="1119.10" textLength="64.83" lengthAdjust="spacingAndGlyphs">Source</tspan></text>
<rect x="922.8" y="525.0" width="25.40000000000009" height="20.19999999999999" fill="#6c9cf0" stroke="#d8e4fc" stroke-width="1"/>
<text class="s sh" transform="translate(924.16,542.00) scale(0.8539,1)" font-size="20.35" fill="#fff" stroke="#fff" stroke-width="0.35" vector-effect="non-scaling-stroke" >U2</text>
<rect x="856" y="554.6" width="160" height="2.4" fill="#060630" />
<rect x="856" y="557.0" width="160" height="1.2" fill="#a8bce6" />
<text class="s sh" transform="translate(0,574.40) scale(0.7919,1)" font-size="20.35" fill="#fff" stroke="#fff" stroke-width="0.35" vector-effect="non-scaling-stroke"><tspan x="1131.09" textLength="33.34" lengthAdjust="spacingAndGlyphs">Min</tspan> <tspan x="1177.94" textLength="51.15" lengthAdjust="spacingAndGlyphs">Order</tspan></text>
<text class="s sh" transform="translate(891.35,595.60) scale(0.8208,1)" font-size="20.35" fill="#fff" stroke="#fff" stroke-width="0.35" vector-effect="non-scaling-stroke" >0</text>
<rect x="965.9" y="578.8" width="15.600000000000023" height="20.599999999999966" fill="#6c9cf0" stroke="#d8e4fc" stroke-width="1"/>
<text class="s sh" transform="translate(970.62,595.60) scale(0.5688,1)" font-size="20.35" fill="#fff" stroke="#fff" stroke-width="0.35" vector-effect="non-scaling-stroke" >1</text>
<path d="M858 614.8L869 603.8L880 614.8L869 625.8Z" fill="#17438f" stroke="#fff" stroke-width="1.2"/>
<rect x="864" y="609.8" width="10" height="10" fill="#4a72b6" stroke="#fff" stroke-width="1.2"/>
<text class="s sh" transform="translate(0,620.90) scale(0.7850,1)" font-size="20.35" fill="#fff" stroke="#fff" stroke-width="0.35" vector-effect="non-scaling-stroke"><tspan x="1138.38" textLength="35.76" lengthAdjust="spacingAndGlyphs">Max</tspan> <tspan x="1188.85" textLength="55.65" lengthAdjust="spacingAndGlyphs">Order</tspan></text>
<rect x="917.8" y="626.9" width="35.3" height="20.1" fill="#6c9cf0" stroke="#d8e4fc" stroke-width="1"/>
<rect x="940.5" y="627" width="9.5" height="20" fill="#f4f8ff" />
<rect x="950" y="627" width="1.5" height="20" fill="#2a4890" />
<text class="s sh" transform="translate(0,643.90) scale(0.7707,1)" font-size="20.35" fill="#fff" stroke="#fff" stroke-width="0.35" vector-effect="non-scaling-stroke"><tspan x="1194.12" textLength="23.57" lengthAdjust="spacingAndGlyphs">10</tspan><tspan x="1221.31" textLength="10.85" lengthAdjust="spacingAndGlyphs" fill="#5588e4" stroke="#5588e4">0</tspan></text>
<rect x="856" y="649" width="160" height="2.4" fill="#060630" />
<rect x="856" y="651.4" width="160" height="1.2" fill="#a8bce6" />
<text class="s sh" transform="translate(0,680.70) scale(0.8039,1)" font-size="20.35" fill="#fff" stroke="#fff" stroke-width="0.35" vector-effect="non-scaling-stroke"><tspan x="1103.66" textLength="35.88" lengthAdjust="spacingAndGlyphs">Thd</tspan> <tspan x="1150.88" textLength="72.90" lengthAdjust="spacingAndGlyphs">Formula</tspan></text>
<rect x="902.5" y="712.7" width="66.70000000000005" height="20.600000000000023" fill="#6c9cf0" stroke="#d8e4fc" stroke-width="1"/>
<text class="s sh" transform="translate(903.97,730.20) scale(1.0551,1)" font-size="20.35" fill="#fff" stroke="#fff" stroke-width="0.35" vector-effect="non-scaling-stroke" >1/Total</text>
</svg>
</body></html>
